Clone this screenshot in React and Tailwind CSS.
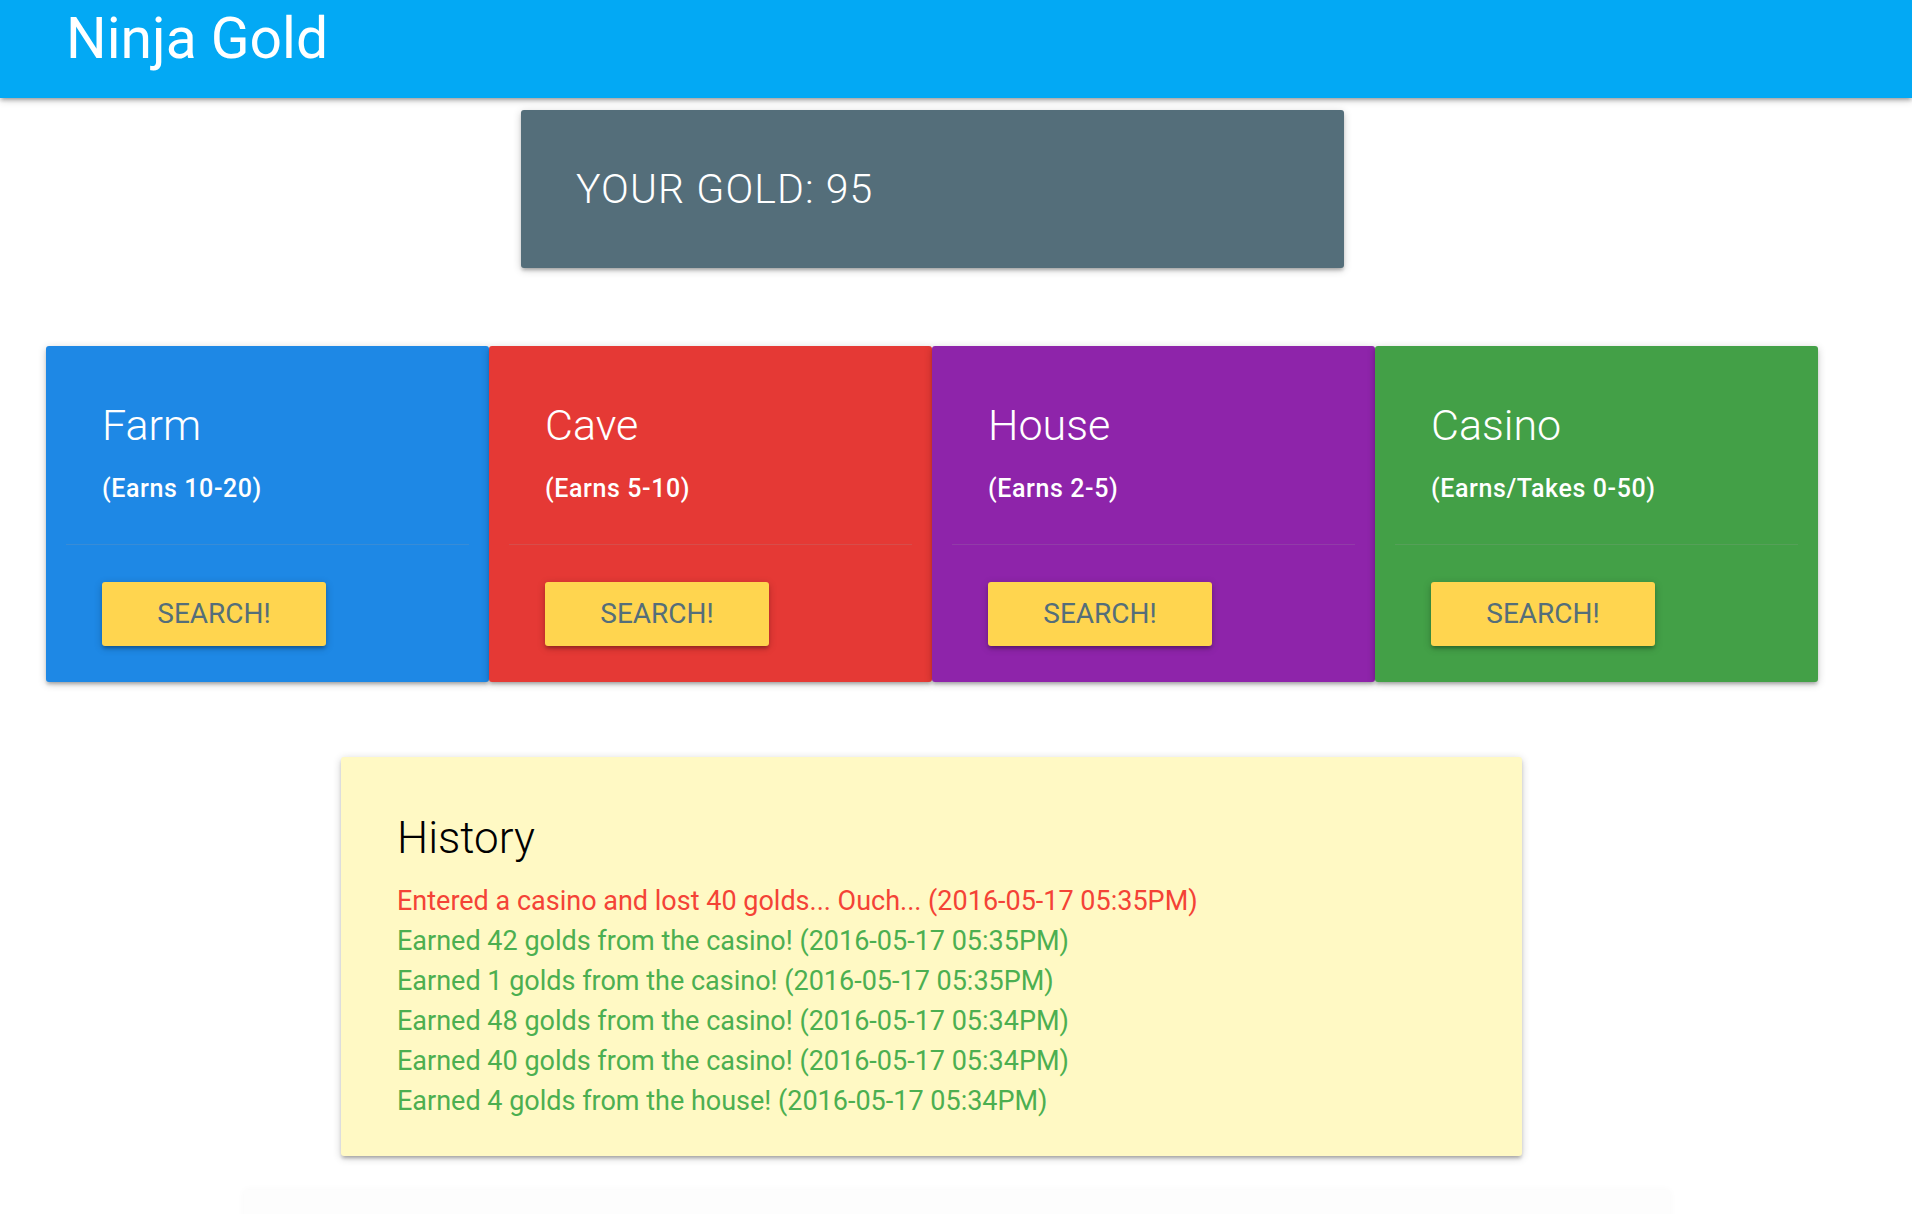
const buildings = [
  { name: "Farm", earns: "(Earns 10-20)", bg: "bg-[#1e88e5]" },
  { name: "Cave", earns: "(Earns 5-10)", bg: "bg-[#e53935]" },
  { name: "House", earns: "(Earns 2-5)", bg: "bg-[#8e24aa]" },
  { name: "Casino", earns: "(Earns/Takes 0-50)", bg: "bg-[#43a047]" },
];

const history = [
  { text: "Entered a casino and lost 40 golds... Ouch... (2016-05-17 05:35PM)", lost: true },
  { text: "Earned 42 golds from the casino! (2016-05-17 05:35PM)" },
  { text: "Earned 1 golds from the casino! (2016-05-17 05:35PM)" },
  { text: "Earned 48 golds from the casino! (2016-05-17 05:34PM)" },
  { text: "Earned 40 golds from the casino! (2016-05-17 05:34PM)" },
  { text: "Earned 4 golds from the house! (2016-05-17 05:34PM)" },
];

const shadow =
  "shadow-[0_3px_3px_0_rgba(0,0,0,0.14),0_4px_2px_-3px_rgba(0,0,0,0.12),0_2px_8px_0_rgba(0,0,0,0.2)]";

function App() {
  return (
    <div className="min-h-screen bg-white font-['Roboto',sans-serif] overflow-hidden">
      <nav className={`h-[98px] bg-[#03a9f4] pl-[66px] pt-[10px] relative z-10 ${shadow}`}>
        <span className="text-[57px] leading-none text-white">Ninja Gold</span>
      </nav>

      <div className={`ml-[521px] mt-[12px] w-[823px] h-[158px] bg-[#546e7a] rounded-[3px] pl-[55px] pt-[59px] ${shadow}`}>
        <h2 className="text-[41px] leading-none font-light text-white tracking-[1.1px]">
          YOUR GOLD: 95
        </h2>
      </div>

      <div className="ml-[46px] mt-[78px] w-[1772px] grid grid-cols-4">
        {buildings.map((b) => (
          <div
            key={b.name}
            className={`${b.bg} h-[336px] rounded-[3px] p-[20px] flex flex-col ${shadow}`}
          >
            <div className="pl-[36px] pt-[38px] h-[179px] border-b border-[rgba(160,160,160,0.2)]">
              <h3 className="text-[43px] leading-none font-light text-white">
                {b.name}
              </h3>
              <p className="mt-[29px] text-[25px] leading-none font-medium text-white tracking-[0.6px]">
                {b.earns}
              </p>
            </div>
            <div className="pl-[36px] pt-[37px]">
              <button
                className={`w-[224px] h-[64px] bg-[#ffd54f] rounded-[3px] text-[28px] text-[#546e7a] ${shadow}`}
              >
                SEARCH!
              </button>
            </div>
          </div>
        ))}
      </div>

      <div className={`ml-[341px] mt-[75px] w-[1181px] h-[399px] bg-[#fff9c4] rounded-[3px] pl-[56px] pt-[59px] ${shadow}`}>
        <h3 className="text-[44px] leading-none font-light text-black">History</h3>
        <div className="mt-[21px]">
          {history.map((h, i) => (
            <p
              key={i}
              className={`text-[27px] leading-[40px] ${h.lost ? "text-[#f44336]" : "text-[#4caf50]"}`}
            >
              {h.text}
            </p>
          ))}
        </div>
      </div>

      <div className="ml-[244px] mt-[34px] w-[1426px] h-[80px] bg-[#fdfdfd] rounded-[3px] shadow-[0_0_8px_0_rgba(0,0,0,0.03)]"></div>
    </div>
  );
}

export default App;
